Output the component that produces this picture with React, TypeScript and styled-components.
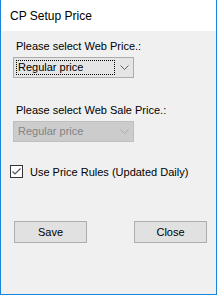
import React from "react";
import styled, { createGlobalStyle } from "styled-components";

const Global = createGlobalStyle`
  html, body { margin: 0; padding: 0; background: #ffffff; }
  * { box-sizing: border-box; }
`;

const Window = styled.div`
  width: 217px;
  height: 295px;
  display: flex;
  flex-direction: column;
  border: 1px solid #1883d7;
  border-top: none;
  background: #f0f0f0;
  font-family: "Liberation Sans", Arial, sans-serif;
`;

const TitleBar = styled.div`
  height: 31px;
  background: #ffffff;
  display: flex;
  align-items: center;
  padding: 1px 0 0 9px;
  font-size: 12px;
  color: #000000;
`;

const Body = styled.div`
  flex: 1;
  display: flex;
  flex-direction: column;
  padding: 9px 9px 0 12px;
`;

const Label = styled.div<{ $top: number }>`
  margin: ${(p) => p.$top}px 0 0 3px;
  font-size: 11px;
  line-height: 13px;
  color: #000000;
`;

const Combo = styled.div<{ $disabled?: boolean }>`
  margin-top: 4px;
  width: 121px;
  height: 21px;
  display: flex;
  align-items: center;
  padding: 0 0 0 2px;
  background: ${(p) => (p.$disabled ? "#cccccc" : "#e5e5e5")};
  border: 1px solid ${(p) => (p.$disabled ? "#bfbfbf" : "#acacac")};
  font-size: 11px;
  color: ${(p) => (p.$disabled ? "#838383" : "#000000")};
`;

const ComboText = styled.div<{ $focus?: boolean }>`
  width: 99px;
  height: 15px;
  line-height: 13px;
  padding-left: 1px;
  border: 1px ${(p) => (p.$focus ? "dotted #000000" : "solid transparent")};
`;

const Arrow = styled.div`
  flex: 1;
  display: flex;
  justify-content: center;
  align-items: center;
`;

const CheckRow = styled.label`
  margin: 23px 0 0 -3px;
  display: flex;
  align-items: center;
  font-size: 11px;
  color: #000000;
`;

const CheckBox = styled.span`
  width: 13px;
  height: 13px;
  border: 1px solid #333333;
  background: #ffffff;
  display: flex;
  align-items: center;
  justify-content: center;
  margin-right: 7px;
`;

const Buttons = styled.div`
  margin-top: 43px;
  display: flex;
  justify-content: space-between;
  padding: 0 0 0 1px;
`;

const Button = styled.button`
  width: 73px;
  height: 22px;
  background: #e1e1e1;
  border: 1px solid #adadad;
  font-family: "Liberation Sans", Arial, sans-serif;
  font-size: 11px;
  color: #000000;
  padding: 0;
`;

const Chevron = ({ color }: { color: string }) => (
  <svg width="9" height="5" viewBox="0 0 9 5">
    <path d="M0.5 0.5 L4.5 4.5 L8.5 0.5" fill="none" stroke={color} strokeWidth="1" />
  </svg>
);

export default function App() {
  return (
    <>
      <Global />
      <Window>
        <TitleBar>CP Setup Price</TitleBar>
        <Body>
          <Label $top={0}>Please select Web Price.:</Label>
          <Combo>
            <ComboText $focus>Regular price</ComboText>
            <Arrow>
              <Chevron color="#606060" />
            </Arrow>
          </Combo>
          <Label $top={26}>Please select Web Sale Price.:</Label>
          <Combo $disabled>
            <ComboText>Regular price</ComboText>
            <Arrow>
              <Chevron color="#a8a8a8" />
            </Arrow>
          </Combo>
          <CheckRow>
            <CheckBox>
              <svg width="11" height="11" viewBox="0 0 11 11">
                <path d="M1.5 5.5 L4 8 L9.5 2.5" fill="none" stroke="#555555" strokeWidth="1.2" />
              </svg>
            </CheckBox>
            Use Price Rules (Updated Daily)
          </CheckRow>
          <Buttons>
            <Button>Save</Button>
            <Button>Close</Button>
          </Buttons>
        </Body>
      </Window>
    </>
  );
}
